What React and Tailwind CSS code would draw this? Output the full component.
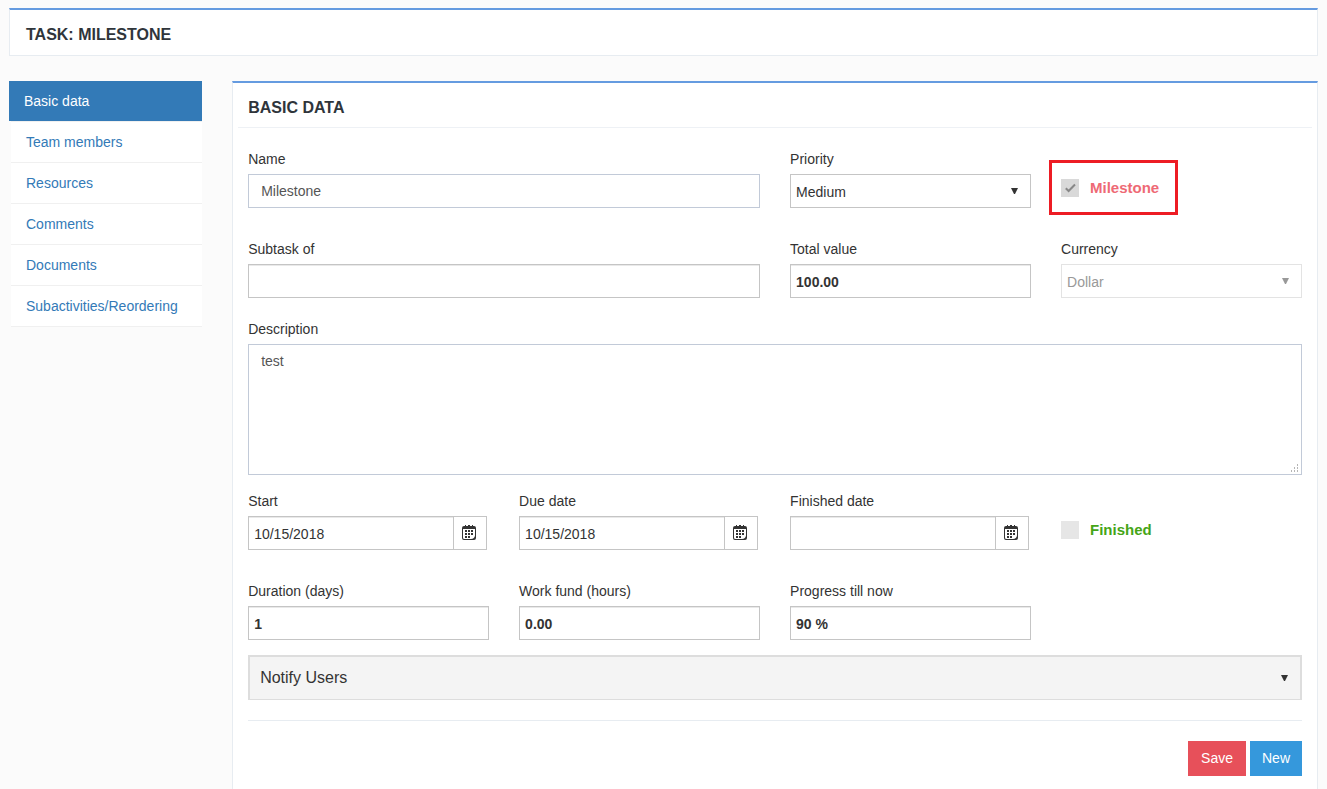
import React, { useState } from 'react';

const navItems = ['Team members', 'Resources', 'Comments', 'Documents', 'Subactivities/Reordering'];

const Field = ({ id, label, className = '', children }) => (
    <div className={className}>
        <label htmlFor={id} className="block mb-[5px] leading-5">{label}</label>
        {children}
    </div>
);

const NumberInput = ({ id, value }) => (
    <input
        id={id}
        type="text"
        defaultValue={value}
        className="block w-full h-[34px] px-[5px] pt-[2px] border border-[#c5c5c5] bg-white font-bold text-[#333] shadow-[inset_0_1px_0_#e9e9e9] outline-none focus:border-[#659be0]"
    />
);

const Arrow = ({ className = '' }) => (
    <svg viewBox="0 0 7 6" className={`w-[7px] h-1.5 pointer-events-none ${className}`} aria-hidden="true">
        <path d="M0 0h7L4 6H3z" fill="currentColor" />
    </svg>
);

const CalendarIcon = () => (
    <svg viewBox="0 0 14 15" className="w-3.5 h-[15px]" aria-hidden="true">
        <path
            fillRule="evenodd"
            fill="#333"
            d="M2 1h1V0h1v1h2V0h2v1h2V0h1v1h1q2 0 2 2v10q0 2-2 2H2q-2 0-2-2V3q0-2 2-2zM1 4v8.5Q1 14 2.5 14H9q3.5-.4 4-3.5V4z"
        />
        <path fill="#333" d="M3 5h2v2H3zM6 5h2v2H6zM9 5h2v2H9zM3 8h2v2H3zM6 8h2v2H6zM9 8h2v2H9zM3 11h2v2H3zM6 11h2v2H6z" />
    </svg>
);

const DateInput = ({ id, value = '' }) => (
    <div className="flex h-[34px] mr-[2px] border border-[#c5c5c5] bg-white">
        <input
            id={id}
            type="text"
            defaultValue={value}
            className="flex-1 min-w-0 px-[5px] pt-[2px] text-[#333] shadow-[inset_0_1px_0_#e9e9e9] outline-none"
        />
        <button type="button" aria-label="Open calendar" className="w-[33px] pr-[2px] pb-px flex items-center justify-center border-l border-[#c5c5c5]">
            <CalendarIcon />
        </button>
    </div>
);

const Check = ({ id, label, className, ...rest }) => (
    <div className={`flex items-center h-5 ${className}`}>
        <div className="relative w-[18px] h-[18px]">
            <input
                id={id}
                type="checkbox"
                className="peer block appearance-none w-[18px] h-[18px] bg-[#e6e6e6] disabled:bg-[#d9d9d9]"
                {...rest}
            />
            <svg viewBox="0 0 18 18" className="absolute inset-0 hidden pointer-events-none peer-checked:block" aria-hidden="true">
                <path d="M4.8 9.2L7.6 12L14 5.5" fill="none" stroke="#888" strokeWidth="2" />
            </svg>
        </div>
        <label htmlFor={id} className="ml-[11px] text-[15px] font-bold">{label}</label>
    </div>
);

const App = () => {
    const [finished, setFinished] = useState(false);

    return (
        <div className="min-h-screen bg-[#fbfbfb] pt-2 px-[9px] text-sm leading-5 text-[#333] font-['Liberation_Sans',Arial,sans-serif]">
            <header className="border border-t-2 border-[#e7ecf1] border-t-[#659be0] bg-white h-12 pl-4 flex items-center">
                <h1 className="text-base font-bold text-[#2f353b] pt-1">TASK: MILESTONE</h1>
            </header>

            <div className="grid grid-cols-12 gap-[30px] mt-[25px]">
                <nav className="col-span-2">
                    <a href="#basic" className="block h-10 py-[10px] px-[15px] bg-[#337ab7] text-white">Basic data</a>
                    <ul className="ml-[2px] border-t border-[#f0f0f0]">
                        {navItems.map((item) => (
                            <li key={item} className="border-b border-[#f0f0f0] bg-white">
                                <a href="#section" className="block h-10 py-[10px] px-[15px] text-[#337ab7] whitespace-nowrap">{item}</a>
                            </li>
                        ))}
                    </ul>
                </nav>

                <main className="col-span-10 border border-b-0 border-t-2 border-[#e7ecf1] border-t-[#659be0] bg-white pb-4">
                    <div className="mx-[5px] px-[10px] h-[45px] pt-[15px] border-b border-[#eef1f5]">
                        <h2 className="text-base leading-5 font-bold text-[#2f353b]">BASIC DATA</h2>
                    </div>

                    <form className="px-[15px] pt-[21px]" onSubmit={(e) => e.preventDefault()}>
                        <div className="grid grid-cols-4 gap-x-[30px]">
                            <Field id="name" label="Name" className="col-span-2 mb-[31px]">
                                <input
                                    id="name"
                                    type="text"
                                    defaultValue="Milestone"
                                    className="block w-full h-[34px] px-3 border border-[#c2cad8] text-[#555] outline-none focus:border-[#93a1bb]"
                                />
                            </Field>
                            <Field id="priority" label="Priority">
                                <div className="relative">
                                    <select id="priority" className="block appearance-none w-full h-[34px] pl-[5px] pt-[2px] border border-[#c5c5c5] bg-white text-[#333]">
                                        <option>Medium</option>
                                        <option>Low</option>
                                        <option>High</option>
                                    </select>
                                    <Arrow className="absolute right-[13px] top-[14px]" />
                                </div>
                            </Field>
                            <div className="-ml-3 mt-[11px] w-[129px] h-[55px] border-3 border-[#ed1c24] pl-[9px] pt-[15px]">
                                <Check id="milestone" label="Milestone" className="text-[#ee6a75]" defaultChecked disabled />
                            </div>

                            <Field id="subtask" label="Subtask of" className="col-span-2 mb-[21px]">
                                <NumberInput id="subtask" value="" />
                            </Field>
                            <Field id="total" label="Total value">
                                <NumberInput id="total" value="100.00" />
                            </Field>
                            <Field id="currency" label="Currency">
                                <div className="relative text-[#999]">
                                    <select id="currency" disabled className="block appearance-none w-full h-[34px] pl-[5px] pt-[2px] border border-[#e3e3e3] bg-white text-[#999] opacity-100">
                                        <option>Dollar</option>
                                    </select>
                                    <Arrow className="absolute right-[13px] top-[14px]" />
                                </div>
                            </Field>

                            <Field id="description" label="Description" className="col-span-4 mb-4">
                                <div className="relative">
                                    <textarea
                                        id="description"
                                        defaultValue="test"
                                        className="block w-full h-[131px] px-3 py-1.5 border border-[#c2cad8] text-[#555] outline-none resize-none"
                                    />
                                    <svg viewBox="0 0 8 9" className="absolute right-[3px] bottom-[2px] w-2 h-[9px] pointer-events-none" aria-hidden="true">
                                        <path d="M0 6h1v2H0zM3 6h1v2H3zM6 6h1v2H6zM3 3h1v2H3zM6 3h1v2H6zM6 0h1v2H6z" fill="#b5b5b5" />
                                    </svg>
                                </div>
                            </Field>

                            <Field id="start" label="Start" className="mb-[31px]">
                                <DateInput id="start" value="10/15/2018" />
                            </Field>
                            <Field id="due" label="Due date">
                                <DateInput id="due" value="10/15/2018" />
                            </Field>
                            <Field id="finishedDate" label="Finished date">
                                <DateInput id="finishedDate" />
                            </Field>
                            <Check
                                id="finished"
                                label="Finished"
                                className="mt-[29px] text-[#45a517]"
                                checked={finished}
                                onChange={(e) => setFinished(e.target.checked)}
                            />

                            <Field id="duration" label="Duration (days)">
                                <NumberInput id="duration" value="1" />
                            </Field>
                            <Field id="work" label="Work fund (hours)">
                                <NumberInput id="work" value="0.00" />
                            </Field>
                            <Field id="progress" label="Progress till now">
                                <NumberInput id="progress" value="90 %" />
                            </Field>
                        </div>

                        <button
                            type="button"
                            className="mt-[15px] flex items-center justify-between w-full h-[45px] pl-[10px] pr-3 border-2 border-b border-[#ddd] bg-[#f4f4f4] text-base text-[#333]"
                        >
                            Notify Users
                            <Arrow />
                        </button>

                        <hr className="my-5 border-[#e7ecf1]" />

                        <div className="flex justify-end gap-1">
                            <button type="submit" className="h-[35px] px-[13px] pb-px bg-[#e7505a] text-white">Save</button>
                            <button type="button" className="h-[35px] px-3 pb-px bg-[#3598dc] text-white">New</button>
                        </div>
                    </form>
                </main>
            </div>
        </div>
    );
};

export default App;
